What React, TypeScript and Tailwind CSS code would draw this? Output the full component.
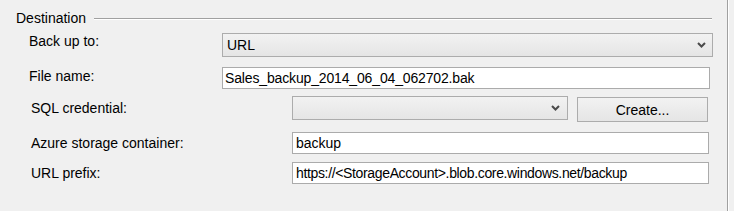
import React from "react";

function Chevron() {
  return (
    <svg width="9" height="6" viewBox="0 0 9 6" className="shrink-0">
      <polyline points="1,1 4.5,4.5 8,1" fill="none" stroke="#4a4a4a" strokeWidth="2" />
    </svg>
  );
}

export default function App() {
  return (
    <div className="w-[734px] h-[211px] bg-[#f0f0f0] flex overflow-hidden font-['Liberation_Sans',Arial,sans-serif] text-[14px] text-black">
      <div className="w-[727px] flex flex-col">
        {/* Group header */}
        <div className="mt-[10px] h-[16px] flex pl-[16px] pr-[15px]">
          <span className="leading-[16px]">Destination</span>
          <div className="ml-[8px] mt-[8px] flex-1 h-[2px] border-t border-[#a0a0a0] border-b border-b-white" />
        </div>

        {/* Back up to */}
        <div className="mt-[7px] h-[24px] flex items-start pl-[29px]">
          <span className="w-[193px] leading-[16px]">Back up to:</span>
          <div className="w-[491px] h-[24px] border border-[#acacac] bg-linear-to-b from-[#f2f2f2] to-[#e5e5e5] flex items-center pl-[4px] pr-[6px]">
            <span className="flex-1 leading-[16px]">URL</span>
            <Chevron />
          </div>
        </div>

        {/* File name */}
        <div className="mt-[10px] h-[22px] flex items-start pl-[29px]">
          <span className="w-[193px] leading-[16px] mt-[1px]">File name:</span>
          <div className="w-[488px] h-[22px] border border-[#ababab] bg-white flex items-center pl-[2px]">
            <span className="leading-[16px] tracking-[-0.15px]">Sales_backup_2014_06_04_062702.bak</span>
          </div>
        </div>

        {/* SQL credential */}
        <div className="mt-[7px] h-[26px] flex items-start pl-[31px]">
          <span className="w-[261px] leading-[16px] mt-[4px]">SQL credential:</span>
          <div className="w-[276px] h-[24px] border border-[#acacac] bg-linear-to-b from-[#f2f2f2] to-[#e5e5e5] flex items-center justify-end pr-[7px]">
            <Chevron />
          </div>
          <div className="ml-[9px] mt-[1px] w-[131px] h-[25px] border border-[#acacac] bg-linear-to-b from-[#f2f2f2] to-[#e5e5e5] flex items-center justify-center">
            <span className="leading-[16px]">Create...</span>
          </div>
        </div>

        {/* Azure storage container */}
        <div className="mt-[10px] h-[22px] flex items-center pl-[31px]">
          <span className="w-[261px] leading-[16px]">Azure storage container:</span>
          <div className="w-[417px] h-[22px] border border-[#ababab] bg-white flex items-center pl-[3px]">
            <span className="leading-[16px]">backup</span>
          </div>
        </div>

        {/* URL prefix */}
        <div className="mt-[8px] h-[22px] flex items-center pl-[31px]">
          <span className="w-[261px] leading-[16px]">URL prefix:</span>
          <div className="w-[417px] h-[22px] border border-[#ababab] bg-white flex items-center pl-[3px]">
            <span className="leading-[16px] tracking-[-0.35px]">https://&lt;StorageAccount&gt;.blob.core.windows.net/backup</span>
          </div>
        </div>
      </div>
      <div className="w-px h-full bg-[#a0a0a0]" />
      <div className="w-px h-full bg-white" />
      <div className="flex-1" />
    </div>
  );
}
